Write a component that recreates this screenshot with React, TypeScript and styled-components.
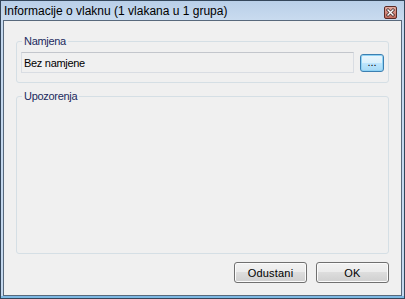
import React from 'react';
import styled, { createGlobalStyle } from 'styled-components';

const GlobalStyle = createGlobalStyle`
  html, body {
    margin: 0;
    padding: 0;
    background: #ffffff;
  }
  * {
    box-sizing: border-box;
  }
`;

const Window = styled.div`
  width: 405px;
  height: 299px;
  display: flex;
  flex-direction: column;
  border: 1px solid #34465a;
  padding: 0 2px 2px;
  background: linear-gradient(
    to bottom,
    #b9cfe8 0,
    #c9dbef 19px,
    #c4d8ee 19px,
    #c4d8ee calc(100% - 2px),
    #7db8e3 calc(100% - 2px)
  );
  font-family: 'Liberation Sans', Arial, sans-serif;
`;

const TitleBar = styled.div`
  height: 19px;
  display: flex;
  align-items: center;
  justify-content: space-between;
  padding: 0 5px 0 1px;
`;

const Title = styled.span`
  font-size: 12px;
  color: #000000;
  white-space: nowrap;
  margin-top: 1px;
`;

const CloseButton = styled.button`
  width: 13px;
  height: 13px;
  padding: 0;
  border: none;
  background: none;
  margin-top: 3px;
  display: flex;
  svg {
    display: block;
  }
`;

const Client = styled.div`
  flex: 1;
  display: flex;
  flex-direction: column;
  border: 1px solid #58697c;
  background: #f0f0f0;
  padding: 13px 12px 12px 12px;
`;

const Group = styled.fieldset<{ $grow?: boolean }>`
  margin: ${(p) => (p.$grow ? '6px 0 0' : '0')};
  padding: 4px 4px 9px;
  border: 1px solid #d5dfe5;
  border-radius: 3px;
  min-width: 0;
  flex: ${(p) => (p.$grow ? '1' : 'none')};
`;

const Legend = styled.legend`
  font-size: 11px;
  line-height: 14px;
  letter-spacing: -0.3px;
  color: #1b2a5e;
  padding: 0 2px;
  margin-left: 1px;
`;

const Row = styled.div`
  display: flex;
  align-items: center;
  gap: 6px;
`;

const TextBox = styled.div`
  flex: 1;
  height: 21px;
  display: flex;
  align-items: center;
  padding: 0 2px;
  background: #f0f0f0;
  border: 1px solid #d9dde3;
  border-top-color: #c3c6cc;
  font-size: 11px;
  letter-spacing: -0.3px;
  color: #000000;
`;

const BrowseButton = styled.button`
  width: 24px;
  height: 18px;
  padding: 0 0 3px;
  border: 1px solid #3c7fb1;
  border-radius: 3px;
  background: linear-gradient(to bottom, #eaf6fd 0%, #d9f0fc 50%, #bee6fd 50%, #a7d9f5 100%);
  box-shadow: inset 0 0 0 1px #8fd3f5;
  font-family: 'Liberation Sans', Arial, sans-serif;
  font-size: 11px;
  line-height: 1;
  color: #000000;
  display: flex;
  align-items: flex-end;
  justify-content: center;
`;

const Footer = styled.div`
  display: flex;
  justify-content: flex-end;
  gap: 9px;
  margin-top: 8px;
`;

const DialogButton = styled.button`
  width: 73px;
  height: 21px;
  padding: 0;
  border: 1px solid #707070;
  border-radius: 3px;
  background: linear-gradient(to bottom, #f2f2f2 0%, #ebebeb 50%, #dddddd 50%, #cfcfcf 100%);
  box-shadow: inset 0 0 0 1px #fbfbfb;
  font-family: 'Liberation Sans', Arial, sans-serif;
  font-size: 11px;
  letter-spacing: 0.2px;
  color: #000000;
`;

const CloseIcon = () => (
  <svg width="13" height="13" viewBox="0 0 13 13">
    <defs>
      <linearGradient id="closeBg" x1="0" y1="0" x2="0" y2="1">
        <stop offset="0" stopColor="#e6b0a6" />
        <stop offset="0.5" stopColor="#d48a7e" />
        <stop offset="1" stopColor="#c06a5d" />
      </linearGradient>
    </defs>
    <rect x="0.5" y="0.5" width="12" height="12" rx="1.5" fill="url(#closeBg)" stroke="#5b2b26" />
    <path d="M4 4 L9 9 M9 4 L4 9" stroke="#4a3030" strokeWidth="3" strokeLinecap="square" />
    <path d="M4 4 L9 9 M9 4 L4 9" stroke="#ffffff" strokeWidth="1.4" strokeLinecap="square" />
  </svg>
);

const App: React.FC = () => {
  return (
    <>
      <GlobalStyle />
      <Window>
        <TitleBar>
          <Title>Informacije o vlaknu (1 vlakana u 1 grupa)</Title>
          <CloseButton>
            <CloseIcon />
          </CloseButton>
        </TitleBar>
        <Client>
          <Group>
            <Legend>Namjena</Legend>
            <Row>
              <TextBox>Bez namjene</TextBox>
              <BrowseButton>...</BrowseButton>
            </Row>
          </Group>
          <Group $grow>
            <Legend>Upozorenja</Legend>
          </Group>
          <Footer>
            <DialogButton>Odustani</DialogButton>
            <DialogButton>OK</DialogButton>
          </Footer>
        </Client>
      </Window>
    </>
  );
};

export default App;
